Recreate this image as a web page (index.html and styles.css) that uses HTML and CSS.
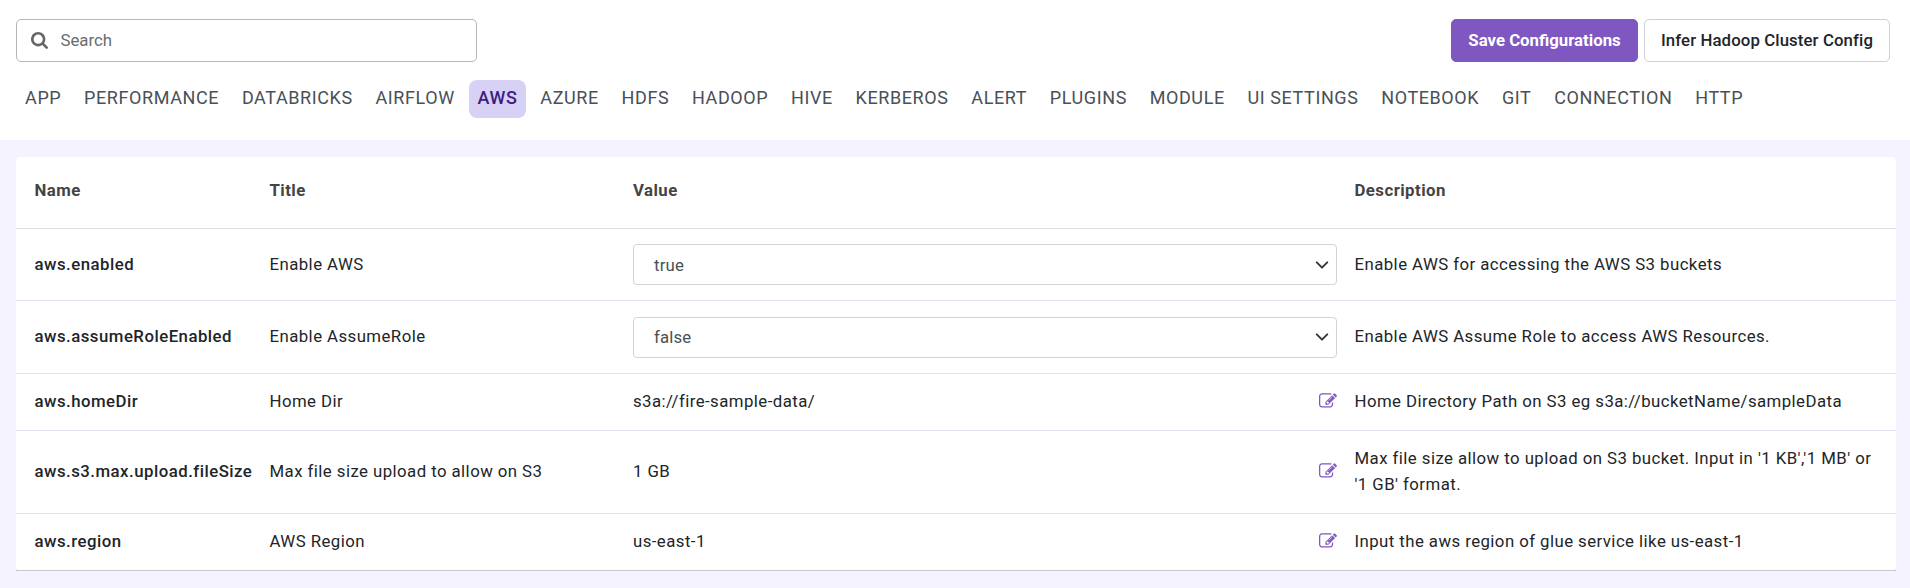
FILE: index.html
```html
<!DOCTYPE html>
<html lang="en">
<head>
<meta charset="utf-8">
<title>Configurations</title>
<link rel="stylesheet" href="styles.css">
</head>
<body>
<svg width="0" height="0" class="sprite">
  <symbol id="edit" viewBox="0 0 1792 1792"><path d="M888 1184l116-116-152-152-116 116v56h96v96h56zm440-720q-16-16-33 1l-350 350q-17 17-1 33t33-1l350-350q17-17 1-33zm80 594v190q0 119-84.500 203.500t-203.500 84.500h-832q-119 0-203.500-84.500t-84.500-203.500v-832q0-119 84.500-203.500t203.500-84.500h832q63 0 117 25 15 7 18 23 3 17-9 29l-49 49q-14 14-32 8-23-6-45-6h-832q-66 0-113 47t-47 113v832q0 66 47 113t113 47h832q66 0 113-47t47-113v-126q0-13 9-22l64-64q15-15 35-7t20 29zm-96-738l288 288-672 672h-288v-288zm444 132l-92 92-288-288 92-92q28-28 68-28t68 28l152 152q28 28 28 68t-28 68z"/></symbol>
  <symbol id="chevron" viewBox="0 0 16 16"><path d="M2 5l6 6 6-6" fill="none" stroke="#343a40" stroke-width="2.3" stroke-linecap="round" stroke-linejoin="round"/></symbol>
</svg>
<header class="top">
  <div class="toolbar">
    <label class="search">
      <svg class="search-icon" viewBox="0 0 1664 1664"><path d="M1152 704q0-185-131.500-316.500t-316.500-131.500-316.500 131.500-131.500 316.500 131.500 316.500 316.500 131.500 316.500-131.500 131.500-316.500zm512 832q0 52-38 90t-90 38q-54 0-90-38l-343-342q-179 124-399 124-143 0-273.500-55.500t-225-150-150-225-55.500-273.500 55.500-273.500 150-225 225-150 273.500-55.500 273.500 55.500 225 150 150 225 55.500 273.500q0 220-124 399l343 343q37 37 37 90z"/></svg>
      <input class="search-input" type="text" placeholder="Search">
    </label>
    <div class="actions">
      <button class="btn btn-primary">Save Configurations</button>
      <button class="btn btn-outline">Infer Hadoop Cluster Config</button>
    </div>
  </div>
  <nav class="tabs">
    <a class="tab">APP</a><a class="tab">PERFORMANCE</a><a class="tab">DATABRICKS</a><a class="tab">AIRFLOW</a><a class="tab active">AWS</a><a class="tab">AZURE</a><a class="tab">HDFS</a><a class="tab">HADOOP</a><a class="tab">HIVE</a><a class="tab">KERBEROS</a><a class="tab">ALERT</a><a class="tab">PLUGINS</a><a class="tab">MODULE</a><a class="tab">UI SETTINGS</a><a class="tab">NOTEBOOK</a><a class="tab">GIT</a><a class="tab">CONNECTION</a><a class="tab">HTTP</a>
  </nav>
</header>
<main class="card">
  <div class="row head"><div>Name</div><div>Title</div><div>Value</div><div>Description</div></div>
  <div class="row tall">
    <div class="name">aws.enabled</div><div>Enable AWS</div>
    <div class="select"><span>true</span><svg class="chevron"><use href="#chevron"/></svg></div>
    <div>Enable AWS for accessing the AWS S3 buckets</div>
  </div>
  <div class="row tall second">
    <div class="name">aws.assumeRoleEnabled</div><div>Enable AssumeRole</div>
    <div class="select"><span>false</span><svg class="chevron"><use href="#chevron"/></svg></div>
    <div>Enable AWS Assume Role to access AWS Resources.</div>
  </div>
  <div class="row">
    <div class="name">aws.homeDir</div><div>Home Dir</div>
    <div class="value"><span>s3a://fire-sample-data/</span><svg class="edit"><use href="#edit"/></svg></div>
    <div>Home Directory Path on S3 eg s3a://bucketName/sampleData</div>
  </div>
  <div class="row double">
    <div class="name">aws.s3.max.upload.fileSize</div><div>Max file size upload to allow on S3</div>
    <div class="value"><span>1 GB</span><svg class="edit"><use href="#edit"/></svg></div>
    <div>Max file size allow to upload on S3 bucket. Input in '1 KB','1 MB' or '1 GB' format.</div>
  </div>
  <div class="row last">
    <div class="name">aws.region</div><div>AWS Region</div>
    <div class="value"><span>us-east-1</span><svg class="edit"><use href="#edit"/></svg></div>
    <div>Input the aws region of glue service like us-east-1</div>
  </div>
</main>
</body>
</html>
```
FILE: styles.css
```css
* { box-sizing: border-box; }
body {
  margin: 0;
  background: #f5f3ff;
  font: 16.8px/26px Roboto, sans-serif;
  color: #212529;
}
.sprite { display: block; }
.top { background: #fff; height: 140px; padding: 19px 20px 0 16px; }
.toolbar { display: flex; justify-content: space-between; }
.search {
  display: flex; align-items: center; gap: 12.5px;
  width: 461px; height: 43px; padding-left: 14px;
  border: 1px solid #b5b5b5; border-radius: 5px;
}
.search-icon { width: 17px; height: 17px; fill: #666; }
.search-input { border: 0; outline: 0; padding: 0 0 2px; font: 16.8px Roboto, sans-serif; background: none; }
.search-input::placeholder { color: #6c6c6c; }
.actions { display: flex; gap: 6px; }
.btn {
  height: 43px; padding: 0 0 2px; border-radius: 5px;
  font: 500 16.8px Roboto, sans-serif; letter-spacing: .1px; white-space: nowrap;
}
.btn-primary { width: 187px; background: #7e57c0; border: 1px solid #7e57c0; color: #fff; font-weight: 700; letter-spacing: 0; }
.btn-outline { width: 246px; background: #fff; border: 1px solid #ced0da; color: #212529; }
.tabs { display: flex; gap: 6px; padding: 18px 0 0 .7px; }
.tab {
  height: 38px; padding: 0 8.4px; border-radius: 8px;
  font-size: 18px; line-height: 36px; letter-spacing: .59px; color: #495057;
  white-space: nowrap;
}
.active { background: #d7d1f5; color: #3d1d80; font-weight: 500; }
.card { margin: 17px 14px 0 16px; background: #fff; border-radius: 5px; }
.row {
  display: grid; grid-template-columns: 235px 363.5px 704px 1fr;
  align-items: center; height: 57px; padding-left: 18.5px;
  border-bottom: 1px solid #e3e0f5; letter-spacing: .44px;
}
.row > div:not(.select) { padding-bottom: 2px; }
.row > div:last-child { padding: 0 17.5px 2px; }
.head { height: 72px; padding-bottom: 4px; font-weight: 700; color: #444; letter-spacing: .45px; border-color: #dcdfe5; }
.tall { height: 72px; }
.second { height: 73px; }
.double { height: 83px; border-color: #dee2e6; }
.last { border-color: #c8c8cc; }
.name { font-weight: 500; letter-spacing: .48px; }
.select {
  display: flex; align-items: center; justify-content: space-between;
  height: 41px; padding: 0 7px 0 20px; border: 1px solid #ced4da; border-radius: 4px;
  color: #495057; letter-spacing: .15px;
}
.chevron { width: 14px; height: 14px; }
.value { display: flex; align-items: center; justify-content: space-between; }
.edit { width: 18px; height: 18px; fill: #7e57c0; }
```
